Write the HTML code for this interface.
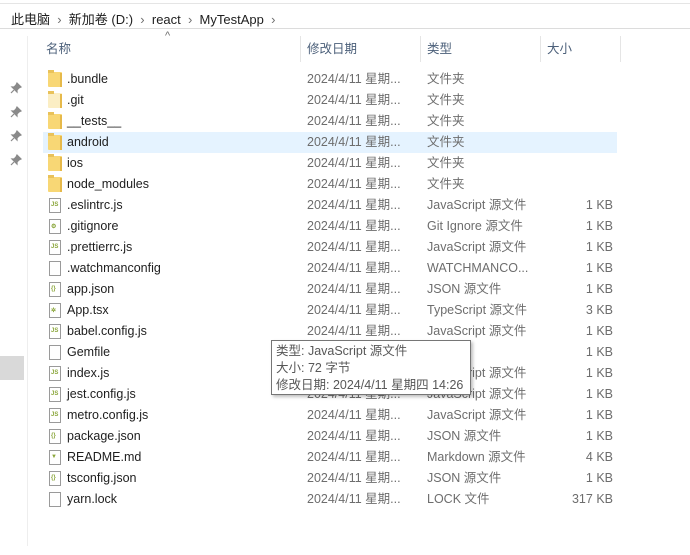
<!DOCTYPE html>
<html><head><meta charset="utf-8"><style>
*{margin:0;padding:0;box-sizing:border-box}
body{width:690px;height:555px;background:#fff;position:relative;overflow:hidden;font-family:"Liberation Sans","Noto Sans CJK SC",sans-serif;font-size:12.5px;color:#1e1e1e}
.a{position:absolute;white-space:nowrap}
.r{line-height:16px;height:16px}
.g{color:#6d6d6d}
.fold{position:absolute;left:48px;width:14px;height:15px;background:#f8d775;border-radius:1px}
.fold:before{content:"";position:absolute;left:0;top:-2px;width:6px;height:3px;background:#e9c25a}
.fold:after{content:"";position:absolute;right:0;top:1px;width:2px;height:14px;background:#e6b94a}
.file{position:absolute;left:49px;width:12px;height:15px;border:1px solid #9a9a9a;background:#fff}
.file i{position:absolute;left:1px;top:3px;font-style:normal;font-size:6px;color:#8aa63a;font-weight:bold}
</style></head><body>
<div class="a" style="left:0;top:0;width:690px;height:4px;border-bottom:1px solid #e5e5e5"></div>
<div class="a" style="left:0;top:28px;width:690px;height:1px;background:#dcdcdc"></div>
<div class="a" style="left:11px;top:9px;font-size:13px">此电脑 <span class="g">&nbsp;›&nbsp;</span> 新加卷 (D:) <span class="g">&nbsp;›&nbsp;</span> react <span class="g">&nbsp;›&nbsp;</span> MyTestApp <span class="g">&nbsp;›</span></div>
<div class="a g" style="left:165px;top:30px;font-size:11px">^</div>
<div class="a" style="left:27px;top:36px;width:1px;height:510px;background:#eee"></div>
<div class="a" style="left:0;top:356px;width:24px;height:24px;background:#d9d9d9"></div>
<svg class="a" style="left:10px;top:82px" width="14" height="90" viewBox="0 0 14 90">
<g fill="#8a8a8a" stroke="#8a8a8a" stroke-width="1.2">
<g transform="translate(0,0)"><path d="M7 1l4 4-2 1-2 2 0 2-5-5 2 0 2-2z"/><path d="M4 8l-3 3"/></g>
<g transform="translate(0,24)"><path d="M7 1l4 4-2 1-2 2 0 2-5-5 2 0 2-2z"/><path d="M4 8l-3 3"/></g>
<g transform="translate(0,48)"><path d="M7 1l4 4-2 1-2 2 0 2-5-5 2 0 2-2z"/><path d="M4 8l-3 3"/></g>
<g transform="translate(0,72)"><path d="M7 1l4 4-2 1-2 2 0 2-5-5 2 0 2-2z"/><path d="M4 8l-3 3"/></g>
</g></svg>
<div class="a" style="left:300px;top:36px;width:1px;height:26px;background:#e5e5e5"></div>
<div class="a" style="left:420px;top:36px;width:1px;height:26px;background:#e5e5e5"></div>
<div class="a" style="left:540px;top:36px;width:1px;height:26px;background:#e5e5e5"></div>
<div class="a" style="left:620px;top:36px;width:1px;height:26px;background:#e5e5e5"></div>
<div class="a r" style="left:46px;top:41px;color:#4c607a">名称</div>
<div class="a r" style="left:307px;top:41px;color:#4c607a">修改日期</div>
<div class="a r" style="left:427px;top:41px;color:#4c607a">类型</div>
<div class="a r" style="left:547px;top:41px;color:#4c607a">大小</div>
<div class="a" style="left:43px;top:132px;width:574px;height:21px;background:#e5f3ff"></div>
<div id="rows"></div>
<script>
var R=[["f",".bundle","","文件夹",""],["f2",".git","","文件夹",""],["f","__tests__","","文件夹",""],["f","android","","文件夹",""],["f","ios","","文件夹",""],["f","node_modules","","文件夹",""],
["js",".eslintrc.js","","JavaScript 源文件","1 KB"],["gi",".gitignore","","Git Ignore 源文件","1 KB"],["js",".prettierrc.js","","JavaScript 源文件","1 KB"],["b",".watchmanconfig","","WATCHMANCO...","1 KB"],["j","app.json","","JSON 源文件","1 KB"],["ts","App.tsx","","TypeScript 源文件","3 KB"],["js","babel.config.js","","JavaScript 源文件","1 KB"],["b","Gemfile","","文件","1 KB"],["js","index.js","","JavaScript 源文件","1 KB"],["js","jest.config.js","","JavaScript 源文件","1 KB"],["js","metro.config.js","","JavaScript 源文件","1 KB"],["j","package.json","","JSON 源文件","1 KB"],["md","README.md","","Markdown 源文件","4 KB"],["j","tsconfig.json","","JSON 源文件","1 KB"],["b","yarn.lock","","LOCK 文件","317 KB"]];
var h="";R.forEach(function(r,i){var y=72+i*21;var ty=y-1;
if(r[0]=="f")h+='<div class="fold" style="top:'+y+'px"></div>';
else if(r[0]=="f2")h+='<div class="fold" style="top:'+y+'px;background:#fbeec4"></div>';
else{var t={js:"JS",gi:"⚙",j:"{}",ts:"✲",md:"▼",b:""}[r[0]];h+='<div class="file" style="top:'+(y)+'px"><i>'+t+'</i></div>';}
h+='<div class="a r" style="left:67px;top:'+ty+'px">'+r[1]+'</div>';
h+='<div class="a r g" style="left:307px;top:'+ty+'px">2024/4/11 星期...</div>';
h+='<div class="a r g" style="left:427px;top:'+ty+'px">'+r[3]+'</div>';
h+='<div class="a r g" style="right:77px;top:'+ty+'px">'+r[4]+'</div>';});
document.getElementById("rows").innerHTML=h;
</script>
<div class="a" style="left:271px;top:340px;width:200px;height:55px;background:#fff;border:1px solid #767676;box-shadow:2px 2px 3px rgba(0,0,0,.25);color:#575757;padding:2px 0 0 4px;line-height:17px">类型: JavaScript 源文件<br>大小: 72 字节<br>修改日期: 2024/4/11 星期四 14:26</div>
</body></html>
